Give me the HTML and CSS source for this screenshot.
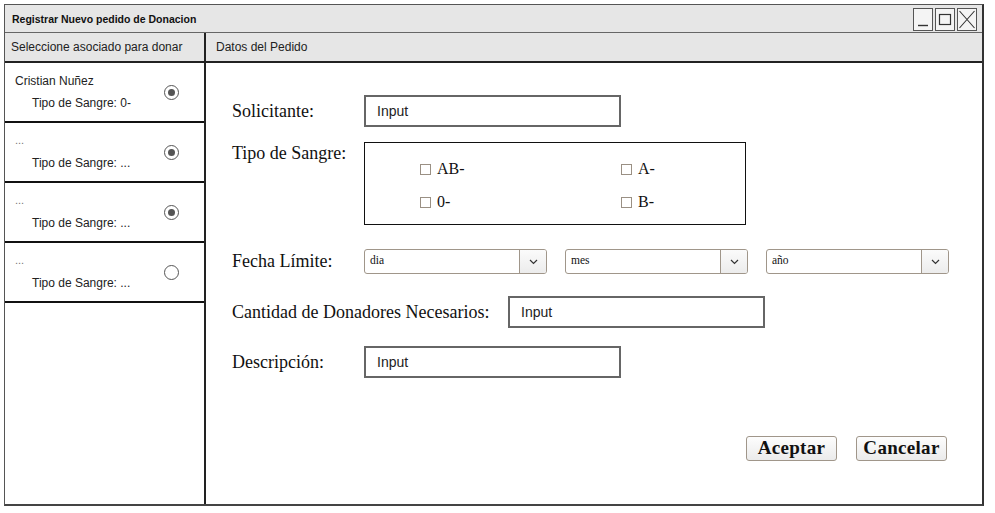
FILE: index.html
```html
<!DOCTYPE html>
<html lang="es">
<head>
<meta charset="utf-8">
<title>Registrar Nuevo pedido de Donacion</title>
<link rel="stylesheet" href="styles.css">
</head>
<body>
<div class="window">
  <div class="titlebar">
    <span class="title">Registrar Nuevo pedido de Donacion</span>
    <div class="winbtns">
      <span class="wbtn"><svg width="18" height="21" viewBox="0 0 18 21"><path d="M4 16.5h10" stroke="#333" stroke-width="1.4"/></svg></span>
      <span class="wbtn"><svg width="18" height="21" viewBox="0 0 18 21"><rect x="3.5" y="5.5" width="11" height="10" fill="none" stroke="#333" stroke-width="1.2"/></svg></span>
      <span class="wbtn"><svg width="18" height="21" viewBox="0 0 18 21"><path d="M1.5 2L16.5 19M16.5 2L1.5 19" stroke="#333" stroke-width="1.1"/></svg></span>
    </div>
  </div>
  <div class="body">
    <div class="left">
      <div class="head">Seleccione asociado para donar</div>
      <div class="item">
        <div class="texts"><div class="name">Cristian Nuñez</div><div class="blood">Tipo de Sangre: 0-</div></div>
        <span class="radio on"></span>
      </div>
      <div class="item">
        <div class="texts"><div class="name dots">...</div><div class="blood">Tipo de Sangre: ...</div></div>
        <span class="radio on"></span>
      </div>
      <div class="item">
        <div class="texts"><div class="name dots">...</div><div class="blood">Tipo de Sangre: ...</div></div>
        <span class="radio on"></span>
      </div>
      <div class="item">
        <div class="texts"><div class="name dots">...</div><div class="blood">Tipo de Sangre: ...</div></div>
        <span class="radio"></span>
      </div>
    </div>
    <div class="right">
      <div class="head">Datos del Pedido</div>
      <div class="form">
        <div class="row r1">
          <span class="label">Solicitante:</span>
          <span class="input">Input</span>
        </div>
        <div class="row r2">
          <span class="label">Tipo de Sangre:</span>
          <div class="group">
            <span class="chk"><span class="box"></span>AB-</span>
            <span class="chk"><span class="box"></span>A-</span>
            <span class="chk"><span class="box"></span>0-</span>
            <span class="chk"><span class="box"></span>B-</span>
          </div>
        </div>
        <div class="row r3">
          <span class="label">Fecha Límite:</span>
          <div class="selects">
            <span class="select"><span class="val">dia</span><span class="arrow"><svg width="9" height="6" viewBox="0 0 9 6"><path d="M1 1l3.5 3.5L8 1" fill="none" stroke="#333" stroke-width="1.2"/></svg></span></span>
            <span class="select"><span class="val">mes</span><span class="arrow"><svg width="9" height="6" viewBox="0 0 9 6"><path d="M1 1l3.5 3.5L8 1" fill="none" stroke="#333" stroke-width="1.2"/></svg></span></span>
            <span class="select"><span class="val">año</span><span class="arrow"><svg width="9" height="6" viewBox="0 0 9 6"><path d="M1 1l3.5 3.5L8 1" fill="none" stroke="#333" stroke-width="1.2"/></svg></span></span>
          </div>
        </div>
        <div class="row r4">
          <span class="label wide">Cantidad de Donadores Necesarios:</span>
          <span class="input">Input</span>
        </div>
        <div class="row r5">
          <span class="label">Descripción:</span>
          <span class="input">Input</span>
        </div>
        <div class="actions">
          <span class="btn">Aceptar</span>
          <span class="btn">Cancelar</span>
        </div>
      </div>
    </div>
  </div>
</div>
</body>
</html>
```
FILE: styles.css
```css
* { box-sizing: border-box; }
html, body { margin: 0; padding: 0; background: #fff; }
body { padding: 4px 0 0 4px; }

.window {
  width: 980px;
  height: 502px;
  border: 1px solid #555;
  border-right: 2px solid #333;
  border-bottom: 2px solid #444;
  display: flex;
  flex-direction: column;
  background: #fff;
}

.titlebar {
  height: 28px;
  background: #e6e6e6;
  border-bottom: 1px solid #666;
  display: flex;
  align-items: center;
  justify-content: space-between;
  padding: 0 5px 0 7px;
}
.title {
  font-family: "Liberation Sans", Arial, sans-serif;
  font-weight: bold;
  font-size: 10.5px;
  color: #111;
}
.winbtns { display: flex; gap: 2px; margin-top: 1px; }
.wbtn {
  flex: 0 0 auto;
  width: 20px;
  height: 23px;
  border: 1px solid #555;
  display: flex;
  align-items: center;
  justify-content: center;
  background: #f4f4f4;
}

.body { flex: 1; display: flex; min-height: 0; }

.head {
  height: 30px;
  background: #e6e6e6;
  border-bottom: 2px solid #222;
  font-family: "Liberation Sans", Arial, sans-serif;
  font-size: 12px;
  color: #222;
  display: flex;
  align-items: center;
}

.left {
  width: 201px;
  border-right: 2px solid #222;
  display: flex;
  flex-direction: column;
}
.left .head { padding-left: 6px; }
.item {
  height: 60px;
  border-bottom: 2px solid #111;
  display: flex;
  align-items: flex-start;
  justify-content: space-between;
  padding: 11px 25px 0 10px;
  font-family: "Liberation Sans", Arial, sans-serif;
  font-size: 12px;
  color: #222;
}
.name { height: 22px; }
.name.dots { color: #777; font-size: 11px; }
.blood { padding-left: 17px; }
.radio {
  width: 15px;
  height: 15px;
  border: 1.5px solid #555;
  border-radius: 50%;
  margin-top: 11px;
  display: flex;
  align-items: center;
  justify-content: center;
}
.radio.on::after {
  content: "";
  width: 7px;
  height: 7px;
  border-radius: 50%;
  background: #555;
}

.right { flex: 1; display: flex; flex-direction: column; }
.right .head { padding-left: 10px; }

.form {
  flex: 1;
  padding: 32px 0 0 26px;
  font-family: "Liberation Serif", "Times New Roman", serif;
  color: #111;
}
.row { display: flex; align-items: center; }
.label { width: 132px; font-size: 18px; }
.label.wide { width: 276px; }

.input {
  width: 257px;
  height: 32px;
  border: 2px solid #666;
  display: flex;
  align-items: center;
  padding-left: 11px;
  font-family: "Liberation Sans", Arial, sans-serif;
  font-size: 14px;
  color: #222;
}

.r2 { margin-top: 15px; align-items: flex-start; }
.r2 .label { margin-top: 1px; }
.group {
  width: 382px;
  height: 83px;
  border: 1px solid #111;
  display: grid;
  grid-template-columns: 201px 1fr;
  grid-auto-rows: 33px;
  padding: 16px 0 0 55px;
}
.chk {
  display: flex;
  align-items: center;
  font-size: 16px;
  height: 20px;
}
.box {
  width: 11px;
  height: 11px;
  border: 1px solid #9a9084;
  margin-right: 6px;
  background: #fff;
}

.r3 { margin-top: 24px; }
.selects { display: flex; gap: 18px; }
.select {
  width: 183px;
  height: 25px;
  border: 1px solid #a0968a;
  border-radius: 3px;
  display: flex;
  font-size: 11.5px;
  background: #fff;
}
.select .val { flex: 1; display: flex; align-items: center; padding-left: 5px; padding-bottom: 3px; }
.select .arrow {
  width: 27px;
  border-left: 1px solid #a0968a;
  display: flex;
  align-items: center;
  justify-content: center;
  background: linear-gradient(#fbfbfb, #ececec);
  border-radius: 0 2px 2px 0;
}

.r4 { margin-top: 22px; }
.r5 { margin-top: 18px; }

.actions {
  display: flex;
  justify-content: flex-end;
  gap: 19px;
  margin-top: 58px;
  padding-right: 35px;
}
.btn {
  width: 91px;
  height: 25px;
  border: 1px solid #a0968a;
  border-radius: 3px;
  background: linear-gradient(#fdfdfd, #ebebeb);
  font-weight: bold;
  font-size: 19px;
  letter-spacing: 0.3px;
  display: flex;
  align-items: center;
  justify-content: center;
  padding-bottom: 1px;
}
```
